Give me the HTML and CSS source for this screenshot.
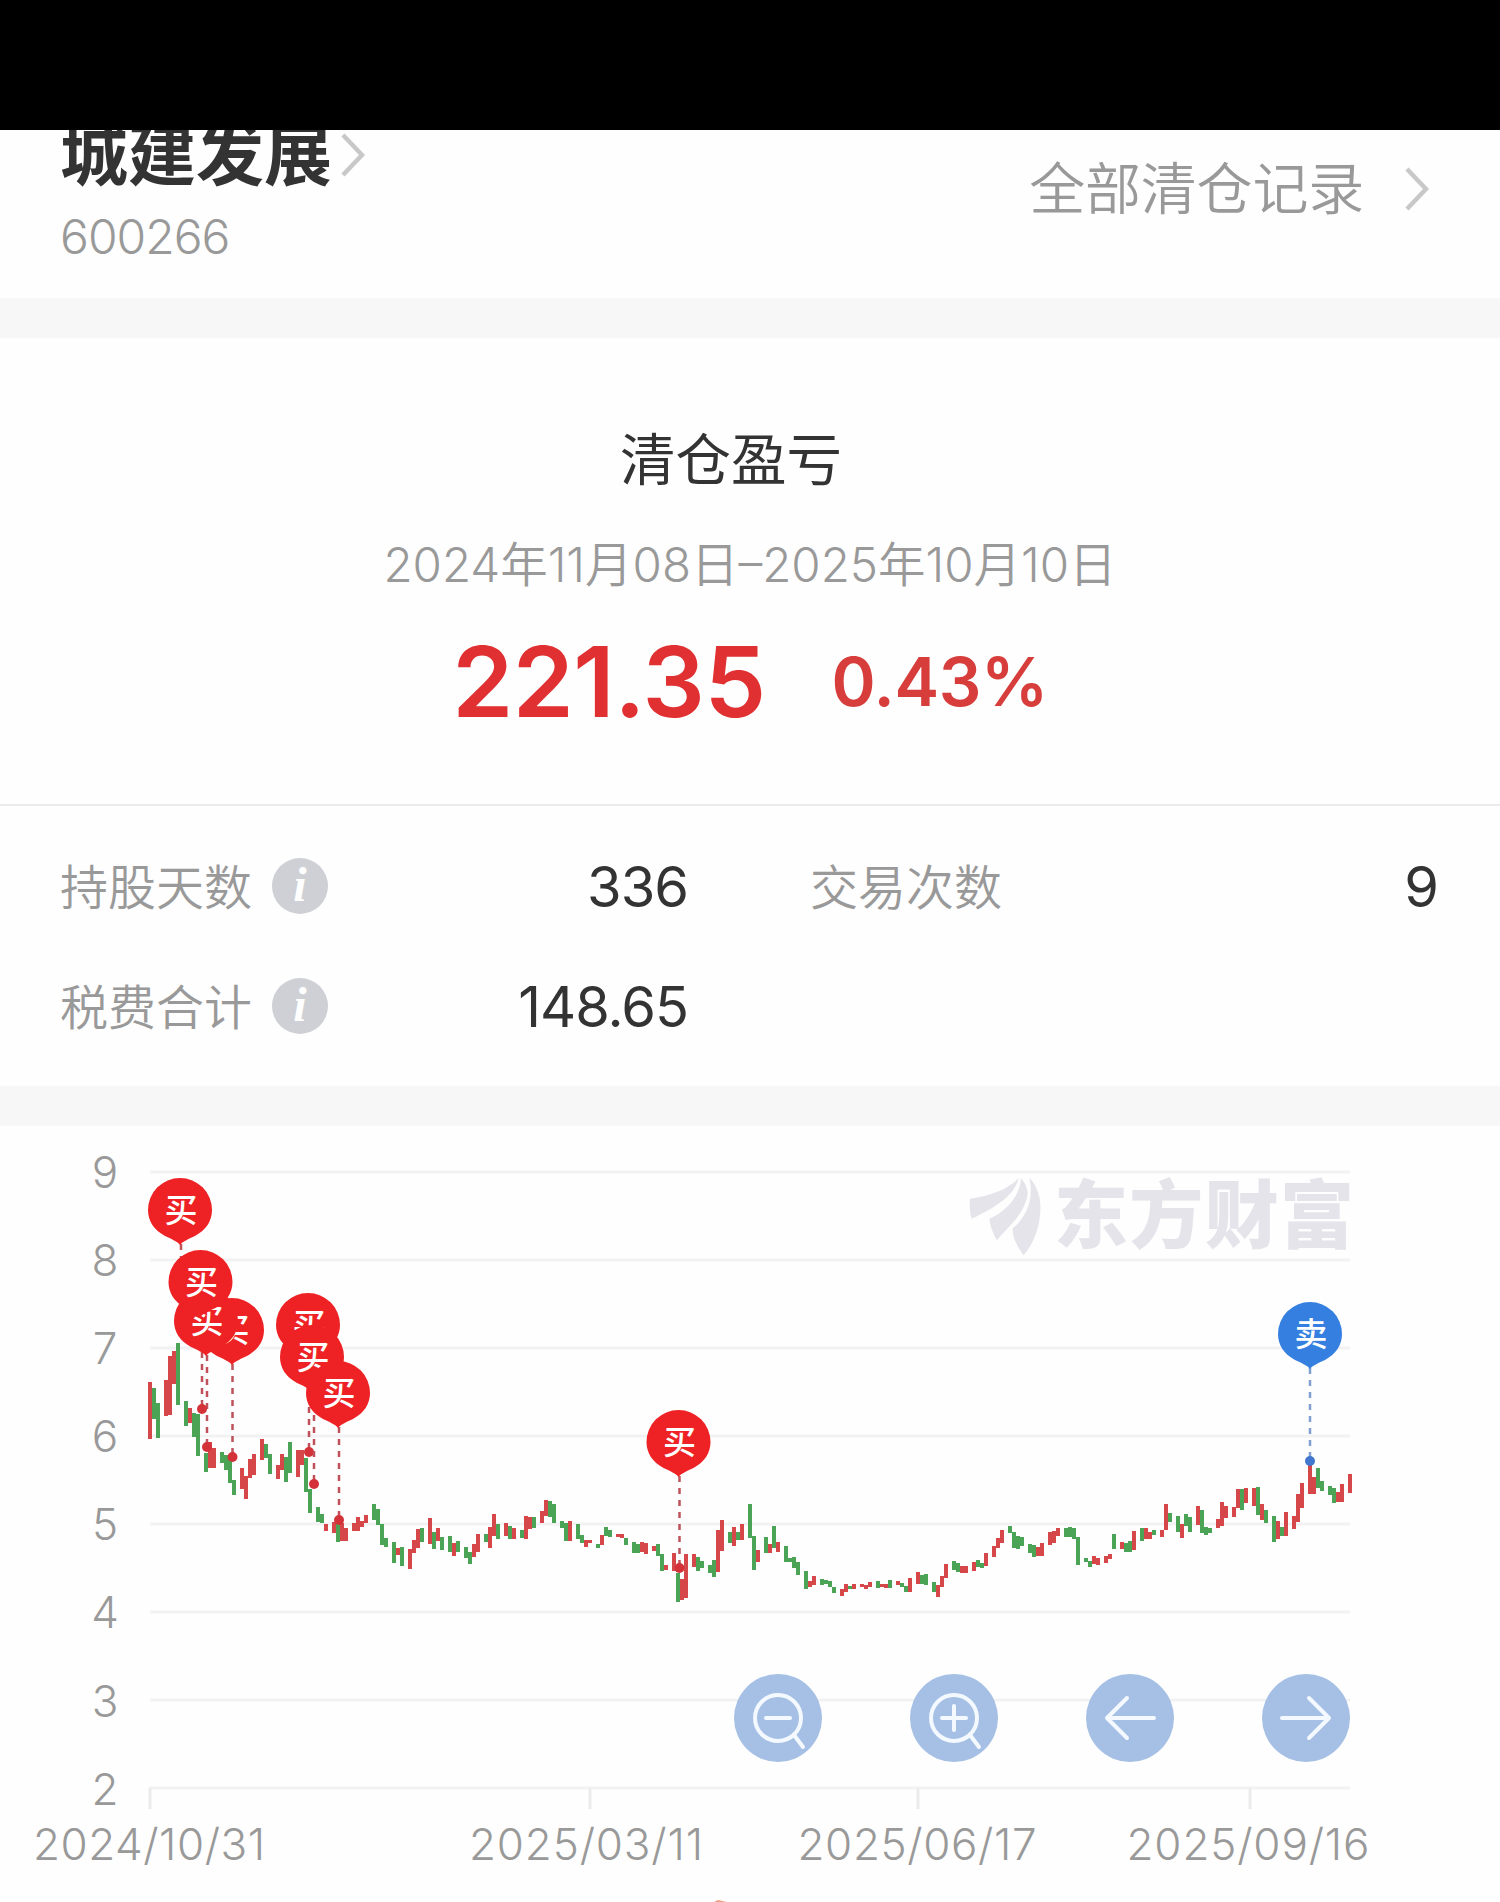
FILE: index.html
```
<!DOCTYPE html>
<html lang="zh-CN">
<head>
    <meta charset="UTF-8">
    <meta name="viewport" content="width=device-width, initial-scale=1.0">
    <title>城建发展 600266</title>
    <link rel="stylesheet" href="styles.css">
</head>
<body>

    <div class="status-bar"></div>

    <header class="header">
        <div class="stock">
            <div class="stock-name">
                <span>城建发展</span>
                <svg class="chevron" viewBox="0 0 24 44"><path d="M2 2 L21 22 L2 42"/></svg>
            </div>
            <div class="stock-code">600266</div>
        </div>
        <div class="records">
            <span>全部清仓记录</span>
            <svg class="chevron" viewBox="0 0 24 44"><path d="M2 2 L21 22 L2 42"/></svg>
        </div>
    </header>

    <div class="divider"></div>

    <section class="summary">
        <h1>清仓盈亏</h1>
        <div class="period">2024年11月08日–2025年10月10日</div>
        <div class="profit">
            <span class="amount">221.35</span>
            <span class="percent">0.43%</span>
        </div>
    </section>

    <section class="details">
        <div class="item">
            <span class="label">持股天数</span>
            <svg class="info" viewBox="0 0 56 56"><circle cx="28" cy="28" r="28"/><text x="28" y="43">i</text></svg>
            <span class="value">336</span>
        </div>
        <div class="item">
            <span class="label">交易次数</span>
            <span class="value">9</span>
        </div>
        <div class="item">
            <span class="label">税费合计</span>
            <svg class="info" viewBox="0 0 56 56"><circle cx="28" cy="28" r="28"/><text x="28" y="43">i</text></svg>
            <span class="value">148.65</span>
        </div>
    </section>

    <div class="divider"></div>

    <section class="chart">
        <svg id="chart" viewBox="0 1126 1500 776">
            <g class="grid">
                <path d="M150 1172H1350M150 1260H1350M150 1348H1350M150 1436H1350M150 1524H1350M150 1612H1350M150 1700H1350M149 1788H1350"/>
                <path class="ticks" d="M150 1788V1809M590 1788V1809M918 1788V1809M1250 1788V1809"/>
            </g>

            <g class="axis">
                <text x="105" y="1188">9</text>
                <text x="105" y="1276">8</text>
                <text x="105" y="1364">7</text>
                <text x="105" y="1452">6</text>
                <text x="105" y="1540">5</text>
                <text x="105" y="1628">4</text>
                <text x="105" y="1717">3</text>
                <text x="105" y="1805">2</text>
                <text x="149" y="1860" textLength="232">2024/10/31</text>
                <text x="586" y="1860" textLength="234">2025/03/11</text>
                <text x="917" y="1860" textLength="239">2025/06/17</text>
                <text x="1248" y="1860" textLength="243">2025/09/16</text>
            </g>

            <g class="watermark">
                <g transform="translate(940 1150) scale(0.3333)">
                    <path d="M90 146 C150 138 205 118 236 84 C224 138 160 176 95 206 C89 190 88 165 90 146Z"/>
                    <path d="M243 84 C240 145 190 188 148 206 C152 235 162 255 171 271 C200 235 258 190 263 130 C262 110 252 95 243 84Z"/>
                    <path d="M268 84 C284 150 256 205 218 235 C216 265 234 290 250 316 C288 275 308 205 299 145 C293 115 280 95 268 84Z"/>
                </g>
                <text x="1054" y="1242" textLength="300">东方财富</text>
            </g>

            <g id="candles"></g>
            <g id="markers"></g>

            <g class="button">
                <circle class="bg" cx="778" cy="1718" r="44"/>
                <circle cx="778" cy="1718" r="23"/>
                <path d="M766 1718H790M794 1735L803 1747"/>
            </g>
            <g class="button">
                <circle class="bg" cx="954" cy="1718" r="44"/>
                <circle cx="954" cy="1718" r="23"/>
                <path d="M942 1718H966M954 1706V1730M970 1735L979 1747"/>
            </g>
            <g class="button">
                <circle class="bg" cx="1130" cy="1718" r="44"/>
                <path d="M1154 1718H1107M1127 1698L1107 1718L1127 1738"/>
            </g>
            <g class="button">
                <circle class="bg" cx="1306" cy="1718" r="44"/>
                <path d="M1282 1718H1329M1309 1698L1329 1718L1309 1738"/>
            </g>

            <path class="speck" d="M714 1902L718 1900L727 1902Z"/>
        </svg>
    </section>

    <script>
        const NS = 'http://www.w3.org/2000/svg';

        // day, top, bottom, colour (r = up, g = down)
        const candles = `
            0 1382 1439 r,1 1388 1419 g,2 1403 1438 g,4 1380 1416 r,5 1356 1415 r,6 1351 1384 r,7 1343 1405 g,
            9 1401 1426 g,10 1408 1423 r,11 1413 1437 g,12 1414 1456 g,14 1453 1472 g,15 1442 1468 r,16 1448 1468 r,
            18 1452 1463 g,19 1455 1470 g,20 1457 1483 g,21 1480 1495 g,23 1468 1489 r,24 1476 1499 r,25 1459 1478 r,26 1454 1475 r,
            28 1439 1460 r,29 1444 1458 g,30 1454 1474 g,32 1465 1479 r,33 1454 1470 r,34 1457 1482 g,35 1442 1473 g,
            37 1450 1477 r,38 1450 1465 r,39 1458 1492 g,40 1489 1513 g,42 1507 1522 g,43 1514 1523 g,44 1524 1531 r,
            46 1522 1533 r,47 1523 1542 g,48 1523 1541 r,49 1528 1541 r,51 1523 1531 r,52 1517 1531 r,53 1521 1527 r,54 1515 1523 r,
            56 1504 1520 g,57 1509 1525 g,58 1524 1545 g,59 1538 1547 g,61 1542 1563 g,62 1548 1555 r,63 1547 1566 g,
            65 1549 1569 r,66 1540 1553 r,67 1529 1548 r,68 1528 1542 g,70 1518 1544 r,71 1532 1549 g,72 1528 1541 r,73 1537 1550 g,
            75 1536 1552 g,76 1543 1556 r,77 1541 1552 g,79 1547 1558 g,80 1552 1564 g,81 1544 1557 r,82 1534 1552 r,
            84 1534 1542 g,85 1527 1548 r,86 1514 1536 r,87 1524 1539 g,89 1523 1536 r,90 1526 1539 g,91 1528 1539 r,
            93 1530 1538 g,94 1516 1539 r,95 1517 1529 r,96 1517 1528 g,98 1511 1523 r,99 1500 1516 r,100 1501 1517 g,101 1504 1523 g,
            103 1521 1528 g,104 1523 1541 g,105 1521 1541 r,107 1524 1539 g,108 1535 1543 g,109 1540 1547 r,110 1540 1543 r,
            112 1544 1548 g,113 1535 1545 r,114 1527 1536 g,115 1530 1537 g,117 1534 1537 r,118 1534 1538 r,119 1538 1545 g,
            121 1542 1553 g,122 1544 1553 g,123 1542 1552 r,124 1543 1554 r,126 1546 1551 r,127 1544 1556 g,128 1554 1571 g,129 1565 1570 r,
            131 1553 1571 r,132 1573 1602 g,133 1579 1600 r,134 1554 1598 r,136 1554 1567 r,137 1557 1571 g,138 1561 1568 g,
            140 1565 1573 g,141 1560 1577 g,142 1530 1572 r,143 1520 1551 r,145 1532 1543 g,146 1527 1546 r,147 1532 1540 g,148 1524 1540 r,
            150 1504 1538 g,151 1536 1570 g,152 1550 1562 r,154 1537 1553 g,155 1544 1553 r,156 1526 1548 g,157 1542 1552 r,
            159 1546 1562 g,160 1558 1562 g,161 1557 1568 g,162 1562 1575 g,164 1571 1589 g,165 1581 1587 r,166 1576 1585 r,
            168 1579 1585 g,169 1580 1584 g,170 1581 1587 g,171 1587 1593 g,173 1589 1596 r,174 1584 1592 r,175 1586 1589 g,176 1584 1589 r,
            178 1584 1587 r,179 1585 1589 r,180 1582 1587 r,182 1581 1588 g,183 1584 1587 r,184 1584 1588 r,185 1580 1588 g,
            187 1581 1585 r,188 1583 1587 g,189 1586 1592 g,190 1578 1592 r,192 1572 1584 r,193 1575 1584 g,194 1574 1585 g,
            196 1582 1592 g,197 1585 1597 r,198 1576 1587 r,199 1564 1578 r,201 1561 1570 g,202 1563 1572 g,203 1566 1573 r,204 1566 1573 r,
            206 1562 1571 r,207 1560 1567 g,208 1563 1568 g,209 1553 1566 r,211 1546 1557 r,212 1538 1548 r,213 1530 1543 r,
            215 1526 1533 g,216 1532 1548 g,217 1536 1549 g,218 1537 1546 g,220 1544 1553 g,221 1545 1557 g,222 1547 1556 r,223 1543 1556 r,
            225 1532 1545 r,226 1531 1543 r,227 1528 1536 r,229 1528 1537 g,230 1527 1537 g,231 1528 1539 g,232 1537 1565 g,
            234 1558 1562 g,235 1561 1567 g,236 1556 1564 r,237 1558 1565 r,239 1556 1563 r,240 1554 1559 r,241 1534 1549 g,
            243 1542 1549 r,244 1543 1552 g,245 1541 1552 g,246 1531 1550 r,248 1528 1541 g,249 1528 1539 r,250 1532 1539 r,251 1530 1535 g,
            253 1530 1537 r,254 1504 1530 r,255 1513 1522 g,257 1516 1532 g,258 1524 1538 r,259 1514 1526 g,260 1517 1532 g,
            262 1506 1525 r,263 1510 1533 g,264 1527 1535 g,265 1528 1533 g,267 1519 1528 r,268 1502 1526 r,269 1506 1518 r,
            271 1507 1517 r,272 1489 1508 r,273 1489 1510 g,274 1488 1503 r,276 1488 1506 r,277 1487 1515 g,278 1504 1520 r,279 1510 1523 g,
            281 1516 1542 g,282 1521 1539 r,283 1527 1536 g,284 1512 1536 r,286 1516 1529 r,287 1494 1522 r,288 1483 1508 r,
            290 1465 1494 r,291 1477 1494 r,292 1468 1488 g,293 1481 1491 g,295 1486 1495 g,296 1488 1503 g,297 1492 1502 r,298 1484 1502 r,
            300 1474 1493 r`;

        // x, pin top, x of the dashed line, y of the trade point
        const markers = [
            { x: 180, top: 1178, px: 181, py: 1262, type: 'buy', dot: false },
            { x: 232, top: 1298, px: 232.5, py: 1457, type: 'buy', dot: true },
            { x: 206, top: 1289, px: 207, py: 1447, type: 'buy', dot: true },
            { x: 200.5, top: 1250, px: 202, py: 1409, type: 'buy', dot: true },
            { x: 308, top: 1293, px: 309, py: 1452, type: 'buy', dot: true },
            { x: 312, top: 1325, px: 314, py: 1484, type: 'buy', dot: true },
            { x: 338, top: 1361, px: 339, py: 1520, type: 'buy', dot: true },
            { x: 678.5, top: 1410, px: 679.5, py: 1568, type: 'buy', dot: true },
            { x: 1310, top: 1302, px: 1310, py: 1461, type: 'sell', dot: true }
        ];

        function add(parent, tag, attrs, text) {
            const el = document.createElementNS(NS, tag);
            for (const key in attrs) el.setAttribute(key, attrs[key]);
            if (text) el.textContent = text;
            parent.appendChild(el);
            return el;
        }

        const candleLayer = document.getElementById('candles');
        candles.split(',').forEach(row => {
            const [day, top, bottom, color] = row.trim().split(' ');
            add(candleLayer, 'rect', {
                x: 148 + day * 4, y: top, width: 4, height: bottom - top,
                class: color === 'r' ? 'up' : 'down'
            });
        });

        const markerLayer = document.getElementById('markers');
        // Lines and points first so that every pin lies over them
        markers.forEach(m => {
            add(markerLayer, 'path', { d: `M${m.px} ${m.top + 66}V${m.py}`, class: 'line ' + m.type });
            if (m.dot) add(markerLayer, 'circle', { cx: m.px, cy: m.py, r: 5, class: 'dot ' + m.type });
        });
        markers.forEach(m => {
            const g = add(markerLayer, 'g', { transform: `translate(${m.x} ${m.top})`, class: 'pin ' + m.type });
            add(g, 'path', { d: 'M0 67 C-3 63 -9 61 -15 58 C-26 52 -32 43 -32 32 A32 32 0 0 1 32 32 C32 43 26 52 15 58 C9 61 3 63 0 67Z' });
            add(g, 'text', { x: 1, y: 44 }, m.type === 'buy' ? '买' : '卖');
        });
    </script>
</body>
</html>
```
FILE: styles.css
```
* {
    box-sizing: border-box;
}

body {
    margin: 0;
    width: 1500px;
    height: 1902px;
    overflow: hidden;
    background: #fefefe;
    color: #333;
    font-family: Inter, 'Noto Sans CJK SC', sans-serif;
}

.status-bar {
    height: 130px;
    background: #000;
}

.divider {
    height: 40px;
    background: #f7f7f7;
}

.chevron {
    width: 24px;
    height: 44px;
    fill: none;
    stroke: #c8c8c8;
    stroke-width: 4.5;
}

/* --- HEADER --- */
.header {
    display: flex;
    justify-content: space-between;
    align-items: flex-start;
    height: 168px;
    padding: 0 71px 0 60px;
    overflow: hidden; /* the name slides under the status bar */
}

.stock-name {
    display: flex;
    align-items: center;
    gap: 9px;
    margin-top: -5px;
    font-size: 68px;
    font-weight: 700;
    line-height: 60px;
}

.stock-code {
    margin-top: 28px;
    color: #999;
    font-size: 48px;
    font-weight: 350;
    line-height: 48px;
    letter-spacing: -1px;
}

.records {
    display: flex;
    align-items: center;
    gap: 41px;
    padding-top: 31px;
    color: #999;
    font-size: 56px;
    font-weight: 350;
    line-height: 56px;
    letter-spacing: -0.2px;
}

/* --- PROFIT --- */
.summary {
    height: 468px;
    padding-top: 92px;
    border-bottom: 2px solid #ebebeb;
    text-align: center;
}

.summary h1 {
    margin: 0;
    padding-right: 38px;
    font-size: 55.5px;
    font-weight: 400;
    line-height: 60px;
}

.period {
    margin-top: 50px;
    color: #999;
    font-size: 47.5px;
    font-weight: 350;
    line-height: 50px;
}

.profit {
    display: flex;
    justify-content: center;
    align-items: center;
    gap: 66px;
    margin-top: 42px;
    font-weight: 600;
    line-height: 100px;
}

.amount {
    color: #e03031;
    font-size: 98px;
    letter-spacing: -0.5px;
}

.percent {
    color: #d63d3b;
    font-size: 67px;
    letter-spacing: -0.4px;
}

/* --- DETAILS --- */
.details {
    display: grid;
    grid-template-columns: 1fr 1fr;
    grid-auto-rows: 120px;
    column-gap: 122px;
    height: 280px;
    padding: 20px 62px 20px 60px;
}

.item {
    display: flex;
    align-items: center;
}

.label {
    padding-bottom: 4px;
    color: #999;
    font-size: 48px;
    font-weight: 350;
}

.value {
    margin-left: auto;
    padding-top: 2px;
    font-size: 56px;
    letter-spacing: -1px;
}

.info {
    width: 56px;
    height: 56px;
    margin-left: 20px;
}

.info circle {
    fill: #cfd0d5;
}

.info text {
    fill: #fff;
    font: italic bold 48px 'Liberation Serif', serif;
    text-anchor: middle;
}

/* --- CHART --- */
.chart svg {
    display: block;
    width: 1500px;
    height: 776px;
}

.grid path {
    fill: none;
    stroke: #f2f2f4;
    stroke-width: 3;
}

.grid .ticks {
    stroke: #ebebeb;
}

.axis text {
    fill: #999;
    font-size: 44px;
    font-weight: 350;
    text-anchor: middle;
}

.watermark {
    fill: #e5e4ea;
}

.watermark text {
    font-size: 74px;
    font-weight: 900;
}

.up {
    fill: #d6474a;
}

.down {
    fill: #4ba455;
}

.line {
    stroke-width: 2.5;
    stroke-dasharray: 6 6;
}

.line.buy {
    stroke: #c0505a;
}

.line.sell {
    stroke: #7f9fd0;
}

.dot.buy {
    fill: #d23238;
}

.dot.sell {
    fill: #4177cf;
}

.pin.buy path {
    fill: #ee2225;
}

.pin.sell path {
    fill: #357fe0;
}

.pin text {
    fill: #fff;
    font-size: 33px;
    font-weight: 500;
    text-anchor: middle;
}

.button circle,
.button path {
    fill: none;
    stroke: #f4f9ff;
    stroke-width: 4;
    stroke-linecap: round;
    stroke-linejoin: round;
}

.button .bg {
    fill: #a5c0e4;
    stroke: none;
}

.speck {
    fill: #eba184;
}
```
